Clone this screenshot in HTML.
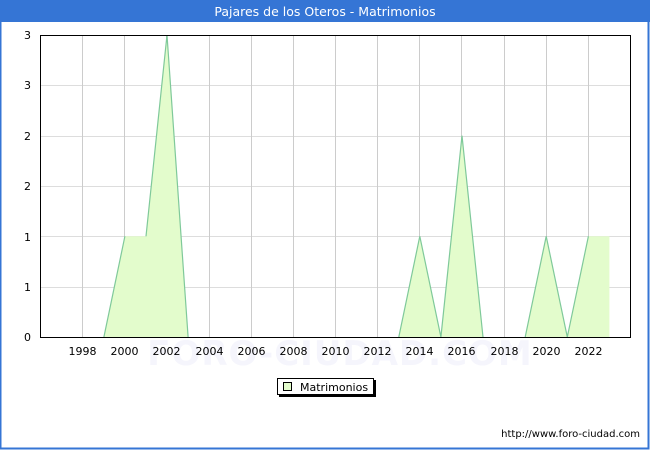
<!DOCTYPE html>
<html><head><meta charset="utf-8"><style>
html,body{margin:0;padding:0;width:650px;height:450px;overflow:hidden;background:#fff;font-family:"DejaVu Sans","Liberation Sans",sans-serif}
</style></head><body>
<svg width="650" height="450" xmlns="http://www.w3.org/2000/svg" style="position:absolute;left:0;top:0">
<rect x="0" y="0" width="650" height="450" fill="#fff"/>
<rect x="0.5" y="0.5" width="648" height="448" fill="none" stroke="#3575d5" stroke-width="2"/>
<rect x="0" y="0" width="650" height="22" fill="#3575d5"/>
<text x="325" y="16" text-anchor="middle" fill="#fff" font-size="12.5">Pajares de los Oteros - Matrimonios</text>
<text x="340" y="365" text-anchor="middle" fill="#f5f5fc" font-size="34" font-weight="bold" letter-spacing="1">FORO-CIUDAD.COM</text>
<g stroke="#dddddd" stroke-width="1">
<line x1="40" y1="85.5" x2="630" y2="85.5"/><line x1="40" y1="136.5" x2="630" y2="136.5"/><line x1="40" y1="186.5" x2="630" y2="186.5"/><line x1="40" y1="236.5" x2="630" y2="236.5"/><line x1="40" y1="287.5" x2="630" y2="287.5"/>
</g>
<g stroke="#cccccc" stroke-width="1">
<line x1="82.5" y1="35" x2="82.5" y2="337"/><line x1="124.5" y1="35" x2="124.5" y2="337"/><line x1="166.5" y1="35" x2="166.5" y2="337"/><line x1="209.5" y1="35" x2="209.5" y2="337"/><line x1="251.5" y1="35" x2="251.5" y2="337"/><line x1="293.5" y1="35" x2="293.5" y2="337"/><line x1="335.5" y1="35" x2="335.5" y2="337"/><line x1="377.5" y1="35" x2="377.5" y2="337"/><line x1="419.5" y1="35" x2="419.5" y2="337"/><line x1="461.5" y1="35" x2="461.5" y2="337"/><line x1="504.5" y1="35" x2="504.5" y2="337"/><line x1="546.5" y1="35" x2="546.5" y2="337"/><line x1="588.5" y1="35" x2="588.5" y2="337"/>
</g>
<polygon fill="#e3fccc" points="103.9,337 124.9,236.3 146,236.3 167,35 188.1,337"/>
<polygon fill="#e3fccc" points="398.8,337 419.8,236.3 440.9,337 462,135.7 483,337"/>
<polygon fill="#e3fccc" points="525.2,337 546.2,236.3 567.3,337 588.4,236.3 609.4,236.3 609.4,337"/>
<g stroke="#7fc99a" stroke-width="1.2" fill="none">
<polyline points="103.9,337 124.9,236.3"/><polyline points="146,236.3 167,35 188.1,337"/>
<polyline points="398.8,337 419.8,236.3 440.9,337 462,135.7 483,337"/>
<polyline points="525.2,337 546.2,236.3 567.3,337 588.4,236.3"/>
</g>
<rect x="40.5" y="35.5" width="590" height="302" fill="none" stroke="#000" stroke-width="1"/>
<g font-size="11" fill="#000" text-anchor="end">
<text x="31" y="39">3</text><text x="31" y="89">3</text><text x="31" y="140">2</text><text x="31" y="190">2</text><text x="31" y="241">1</text><text x="31" y="291">1</text><text x="31" y="341">0</text>
</g>
<g font-size="11" fill="#000" text-anchor="middle">
<text x="82.5" y="355">1998</text><text x="124.5" y="355">2000</text><text x="166.5" y="355">2002</text><text x="209.5" y="355">2004</text><text x="251.5" y="355">2006</text><text x="293.5" y="355">2008</text><text x="335.5" y="355">2010</text><text x="377.5" y="355">2012</text><text x="419.5" y="355">2014</text><text x="461.5" y="355">2016</text><text x="504.5" y="355">2018</text><text x="546.5" y="355">2020</text><text x="588.5" y="355">2022</text>
</g>
<rect x="279" y="380" width="97" height="17" fill="#000"/>
<rect x="277.5" y="378.5" width="96" height="16" fill="#fff" stroke="#000" stroke-width="1"/>
<rect x="283.5" y="382.5" width="8" height="8" fill="#e3fccc" stroke="#000" stroke-width="1"/>
<text x="300" y="391" font-size="11" fill="#000">Matrimonios</text>
<text x="640" y="437" text-anchor="end" font-size="10" fill="#000">http://www.foro-ciudad.com</text>
</svg>
</body></html>
